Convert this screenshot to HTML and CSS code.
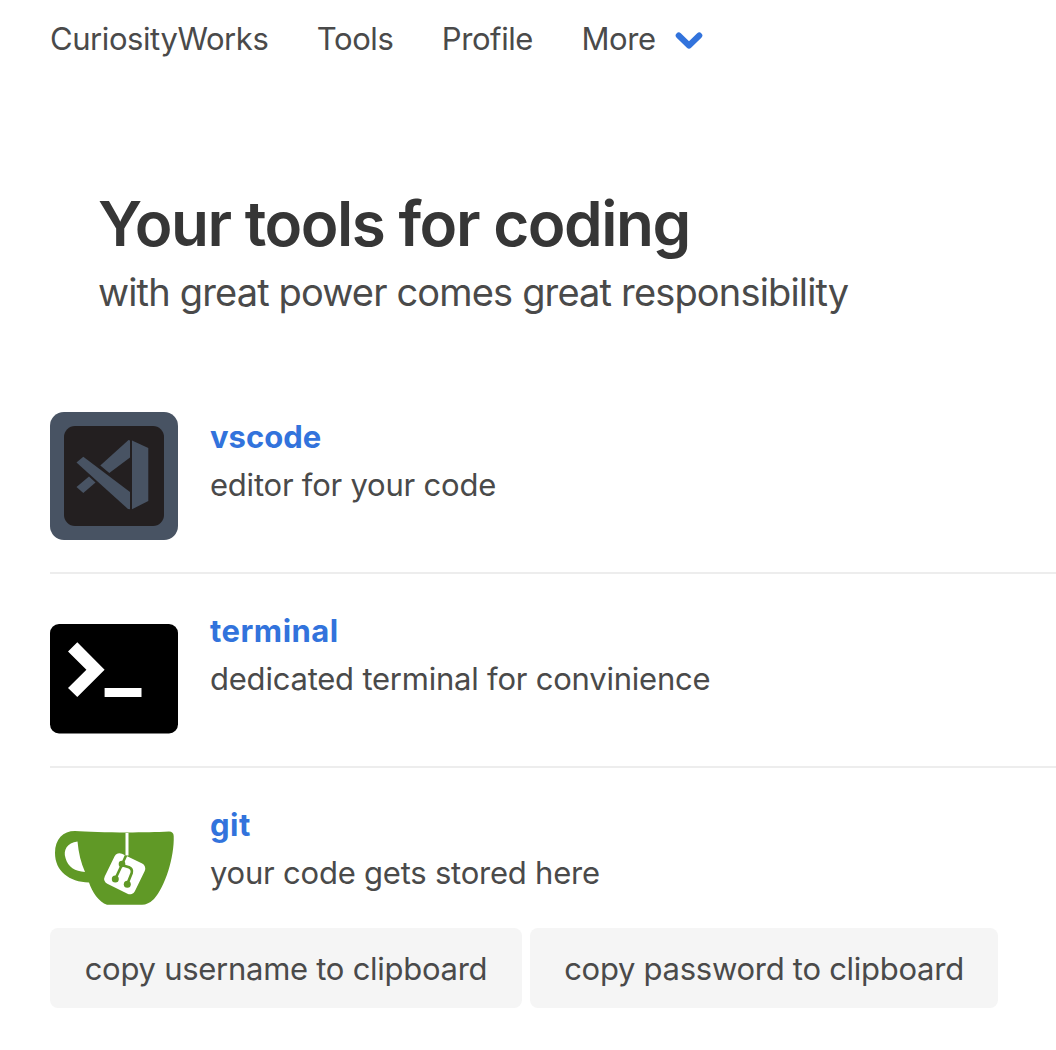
FILE: index.html
```html
<!DOCTYPE html>
<html lang="en">
<head>
<meta charset="utf-8">
<title>CuriosityWorks</title>
<link rel="stylesheet" href="styles.css">
</head>
<body>
<nav class="navbar">
  <a class="nav-item">CuriosityWorks</a>
  <a class="nav-item">Tools</a>
  <a class="nav-item">Profile</a>
  <a class="nav-item">More
    <svg class="chevron" width="28" height="20" viewBox="0 0 28 20"><path d="M3.700 4.500 14 14.500 24.300 4.500" fill="none" stroke="#3273dc" stroke-width="6" stroke-linecap="round" stroke-linejoin="round"/></svg>
  </a>
</nav>
<header class="hero">
  <h1 class="title">Your tools for coding</h1>
  <p class="subtitle">with great power comes great responsibility</p>
</header>
<main class="list">
  <article class="media">
    <svg class="icon" viewBox="0 0 128 128">
      <rect width="128" height="128" rx="14" fill="#485363"/>
      <rect x="14" y="14" width="100" height="100" rx="11" fill="#231f20"/>
      <g fill="#485363">
        <path d="M82 28.500 98.300 36V89L82 97.300Z"/>
        <path d="M78.500 28 80 28.500V45.500L59.300 61 50.300 53.500Z"/>
        <path d="M33.300 44.700 80 80V97.300L78 97 26.500 50.500Z"/>
        <path d="M39 64.500 45.500 70.500 33.300 81 26.500 75Z"/>
      </g>
    </svg>
    <div class="content"><a class="name">vscode</a><p>editor for your code</p></div>
  </article>
  <article class="media">
    <svg class="icon" viewBox="0 0 128 128">
      <rect y="18" width="128" height="109.500" rx="9"/>
      <path d="M18 45.500 27.300 36.300 54.600 63.700 27.300 91 18 82 36.400 63.700ZM54.600 82H91.500V91H54.600Z" fill="#fff"/>
    </svg>
    <div class="content"><a class="name spaced">terminal</a><p>dedicated terminal for convinience</p></div>
  </article>
  <article class="media">
    <svg class="icon" viewBox="0 0 128 128">
      <path d="M25 31C44 32.500 91 33 119 31.500Q123.500 31.500 123.700 36C124.500 57 115 87 104 99Q98 104.800 92 104.800H57C49 102 42 92 39 82.500C19 82 5 71 5 53C5 39 13 31 25 31Z" fill="#609926"/>
      <path d="M27.500 41.500C17 43 13 50 15.500 58C18 67 25 71.500 35 72C31 63 28.500 53 27.500 41.500Z" fill="#fff"/>
      <rect x="58" y="57" width="33.500" height="33.500" rx="5.500" transform="rotate(26 74.800 73.700)" fill="#fff"/>
      <path d="M77 33V55.500" fill="none" stroke="#fff" stroke-width="3"/>
      <path d="M76 55.500 72.500 63.500 65.300 79M72.300 65.300 79 67.300Q82.700 69 81.700 73L77.300 84" fill="none" stroke="#609926" stroke-width="2.600"/>
      <g fill="#609926"><circle cx="72" cy="64" r="3.300"/><circle cx="65.300" cy="79" r="3.500"/><circle cx="77.300" cy="84.200" r="3.500"/></g>
    </svg>
    <div class="content"><a class="name spaced">git</a><p>your code gets stored here</p></div>
  </article>
  <div class="buttons">
    <button class="button user">copy username to clipboard</button>
    <button class="button pass">copy password to clipboard</button>
  </div>
</main>
</body>
</html>
```
FILE: styles.css
```css
* { box-sizing: border-box; }
body {
  margin: 0;
  background: #fff;
  color: #4a4a4a;
  font: 400 31px/48px Inter, "Liberation Sans", sans-serif;
  letter-spacing: -0.22px;
  overflow: hidden;
}
h1, p { margin: 0; }
.navbar { display: flex; height: 80px; padding: 15px 0 0 50px; gap: 48.5px; letter-spacing: -0.43px; }
.nav-item { display: block; white-space: nowrap; }
.chevron { margin-left: 11.500px; vertical-align: -1px; }
.hero { height: 332px; padding: 108px 0 0 98px; }
.title { color: #363636; font-size: 62px; font-weight: 600; line-height: 72px; letter-spacing: -1.48px; white-space: nowrap; }
.subtitle { margin-top: 7px; font-size: 38px; line-height: 50px; letter-spacing: -0.84px; white-space: nowrap; }
.list { padding-left: 50px; }
.media { display: flex; gap: 32px; }
.media + .media { margin-top: 32px; padding-top: 32px; border-top: 2px solid #ededed; }
.icon { display: block; flex: none; width: 128px; height: 128px; }
.content { white-space: nowrap; padding-top: 1px; }
.name { display: block; color: #3273dc; font-weight: 700; letter-spacing: 0; }
.spaced { letter-spacing: 0.5px; }
.buttons { display: flex; gap: 8px; }
.button {
  height: 80px;
  padding: 2px 0 0;
  border: 0;
  border-radius: 8px;
  background: #f5f5f5;
  color: #4a4a4a;
  font: inherit;
  letter-spacing: -0.27px;
  white-space: nowrap;
}
.user { width: 472px; }
.pass { width: 468px; }
```
